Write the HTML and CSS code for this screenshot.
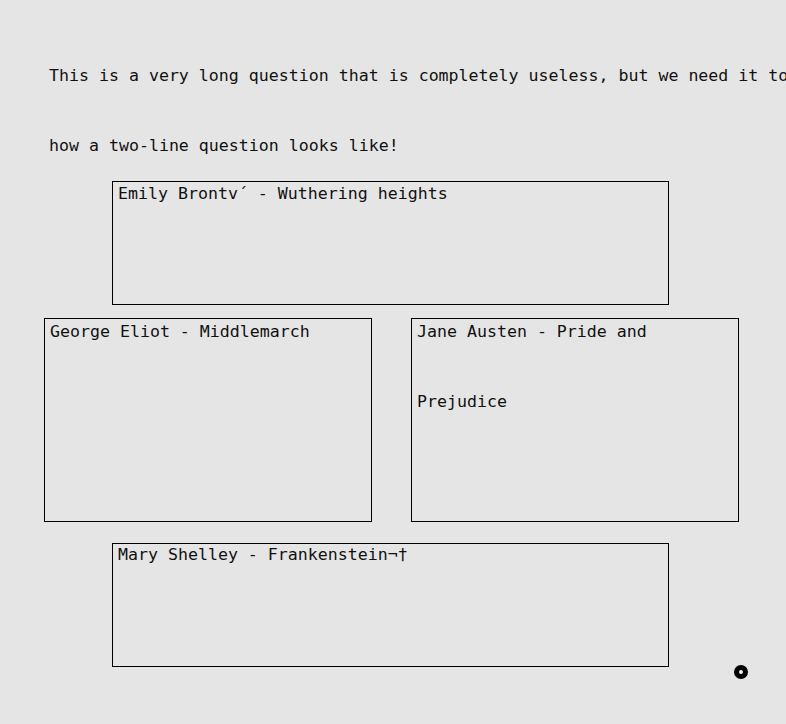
FILE: index.html
```html
<!DOCTYPE html>
<html lang="en">
<head>
<meta charset="utf-8">
<title>Question</title>
<link rel="stylesheet" href="styles.css">
</head>
<body>
<div class="page">
  <p class="question">This is a very long question that is completely useless, but we need it to see how a two-line question looks like!</p>
  <div class="answers">
    <div class="card card-wide card-first"><div class="card-text">Emily Brontv´ - Wuthering heights</div></div>
    <div class="pair">
      <div class="card card-tall"><div class="card-text">George Eliot - Middlemarch</div></div>
      <div class="card card-tall"><div class="card-text">Jane Austen - Pride and Prejudice</div></div>
    </div>
    <div class="card card-wide card-last"><div class="card-text">Mary Shelley - Frankenstein¬†</div></div>
  </div>
  <div class="marker"></div>
</div>
</body>
</html>
```

FILE: styles.css
```css
html, body {
  margin: 0;
  padding: 0;
  overflow: hidden;
  background: #e5e5e5;
}

.page {
  position: relative;
  width: 786px;
  height: 724px;
  padding: 41px 0 0 0;
  box-sizing: border-box;
  font-family: "DejaVu Sans Mono", "Liberation Mono", monospace;
  font-size: 16.6px;
  color: #111;
  overflow: hidden;
}

.question {
  margin: 0 0 0 49px;
  width: 790px;
  line-height: 70px;
}

.answers {
  display: flex;
  flex-direction: column;
  margin-left: 44px;
  width: 695px;
}

.card {
  box-sizing: border-box;
  border: 1px solid #000;
  padding: 0 5px;
}

.card-text {
  margin-top: -23px;
  line-height: 70px;
}

.card-wide {
  width: 557px;
  height: 124px;
  margin-left: 68px;
}

.pair {
  display: flex;
  gap: 39px;
  margin-top: 13px;
}

.card-tall {
  width: 328px;
  height: 204px;
}

.card-tall .card-text {
  margin-top: -22px;
}

.card-last {
  margin-top: 21px;
}

.card-last .card-text {
  margin-top: -24px;
}

.marker {
  position: absolute;
  left: 734px;
  top: 665px;
  width: 14px;
  height: 14px;
  box-sizing: border-box;
  border: 5px solid #000;
  border-radius: 50%;
  background: #f4f4f4;
}
```
